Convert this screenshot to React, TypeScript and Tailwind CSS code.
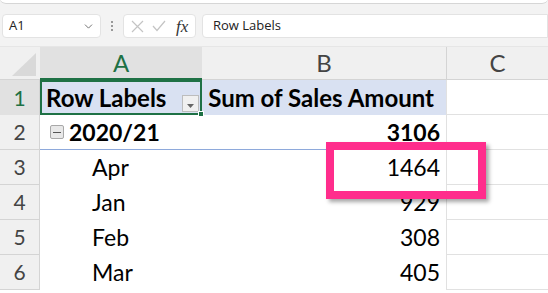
import { ChevronDown } from 'lucide-react';

const rows = [
  { n: '2', label: '2020/21', value: '3106', bold: true },
  { n: '3', label: 'Apr', value: '1464' },
  { n: '4', label: 'Jan', value: '929' },
  { n: '5', label: 'Feb', value: '308' },
  { n: '6', label: 'Mar', value: '405' },
];

const cellFont = "font-['Lato','Noto_Sans',sans-serif]";

export default function App() {
  return (
    <div className={`relative w-[548px] h-[293px] overflow-hidden bg-white ${cellFont}`}>
      {/* Formula bar strip */}
      <div className="relative h-[46px] bg-[#f3f3f3] font-['Open_Sans',sans-serif]">
        <div className="absolute left-0 right-0 top-[-10px] h-[14px] bg-white border-b border-[#d6d6d6] rounded-b-md" />
        <div className="flex items-center pt-[14px] h-[38px]">
          <div className="ml-[2px] w-[99px] h-[24px] bg-white border border-[#e3e3e3] rounded-[4px] flex items-center justify-between pl-[6px] pr-[5px]">
            <span className="text-[13px] text-[#222]">A1</span>
            <ChevronDown className="w-[13px] h-[13px] text-[#555]" strokeWidth={1.5} />
          </div>
          <div className="w-[22px] flex flex-col items-center gap-[2px]">
            <span className="w-[2px] h-[2px] bg-[#999]" />
            <span className="w-[2px] h-[2px] bg-[#999]" />
            <span className="w-[2px] h-[2px] bg-[#999]" />
          </div>
          <div className="w-[73px] h-[24px] bg-white border border-[#e3e3e3] rounded-[4px] flex items-center pl-[6px] gap-[8px]">
            <svg width="13" height="13" viewBox="0 0 13 13" className="ml-[1px]">
              <path d="M1 1 L12 12 M12 1 L1 12" stroke="#c4c4c4" strokeWidth="1.2" fill="none" />
            </svg>
            <svg width="14" height="12" viewBox="0 0 14 12">
              <path d="M1 6 L5 10.5 L13 1" stroke="#c4c4c4" strokeWidth="1.2" fill="none" />
            </svg>
            <span className="ml-[2px] text-[17px] italic font-['Liberation_Serif',serif] text-[#333] leading-none">fx</span>
          </div>
          <div className="ml-[6px] flex-1 h-[24px] bg-white border border-[#e3e3e3] rounded-l-[4px] flex items-center pl-[10px]">
            <span className="text-[13px] text-[#222]">Row Labels</span>
          </div>
        </div>
      </div>

      {/* Column headers */}
      <div className="flex h-[34px] bg-[#f0f0f0] border-t border-[#e6e6e6] text-[24px] text-[#444]">
        <div className="w-[40px] relative border-b border-[#d4d4d4]">
          <svg width="40" height="33" className="absolute left-0 top-0">
            <polygon points="12,29 36,6 36,29" fill="#d9d9d9" />
          </svg>
        </div>
        <div className="w-[162px] flex items-center justify-center bg-[#e1e1e1] border-b-2 border-[#1e7145] text-[#1e7145]">
          A
        </div>
        <div className="w-[245px] flex items-center justify-center border-b border-r border-[#d4d4d4]">B</div>
        <div className="flex-1 flex items-center justify-center border-b border-[#d4d4d4]">C</div>
      </div>

      {/* Row 1 - pivot header */}
      <div className="flex h-[35px] text-[24px]">
        <div className="w-[40px] flex items-center justify-center bg-[#e1e1e1] border-r border-[#d4d4d4] text-[21px] text-[#1e7145]">
          1
        </div>
        <div className="relative w-[162px] bg-[#d9e1f2] border-2 border-[#1e7145] flex items-center pl-[4px] font-bold text-black">
          Row Labels
          <div className="absolute right-[1px] bottom-[1px] w-[17px] h-[17px] bg-[#f0f0f0] border border-[#bdbdbd] flex items-center justify-center">
            <svg width="7" height="4" viewBox="0 0 7 4" className="mt-[4px]">
              <polygon points="0,0 7,0 3.5,4" fill="#666" />
            </svg>
          </div>
          <div className="absolute right-[-4px] bottom-[-4px] w-[6px] h-[6px] bg-[#1e7145] border border-white" />
        </div>
        <div className="w-[244px] bg-[#d9e1f2] flex items-center justify-end pr-[12px] font-bold text-black">
          Sum of Sales Amount
        </div>
        <div className="flex-1 border-l border-b border-[#e1e1e1]" />
      </div>

      {rows.map((r) => (
        <div key={r.n} className="flex h-[35px] text-[23px] text-black">
          <div className="w-[40px] flex items-center justify-center bg-[#f0f0f0] border-r border-b border-[#d4d4d4] text-[21px] text-[#444]">
            {r.n}
          </div>
          <div
            className={`w-[162px] flex items-center ${
              r.bold ? 'pl-[10px] font-bold border-b border-[#8ea9db]' : 'pl-[52px]'
            }`}
          >
            {r.bold && (
              <span className="w-[14px] h-[14px] mr-[5px] rounded-[2px] border border-[#a8a8a8] bg-[#e8e8e8] flex items-center justify-center">
                <span className="w-[8px] h-[1px] bg-[#555]" />
              </span>
            )}
            {r.label}
          </div>
          <div
            className={`w-[245px] flex items-center justify-end pr-[6px] border-r border-[#e1e1e1] ${
              r.bold ? 'font-bold border-b border-b-[#8ea9db]' : ''
            }`}
          >
            {r.value}
          </div>
          <div className="flex-1 border-b border-[#e1e1e1]" />
        </div>
      ))}

      {/* Highlight box */}
      <div className="absolute left-[326px] top-[142px] w-[160px] h-[57px] border-[8px] border-[#ff2d8c] shadow-[3px_3px_4px_rgba(0,0,0,0.35)]" />
    </div>
  );
}
